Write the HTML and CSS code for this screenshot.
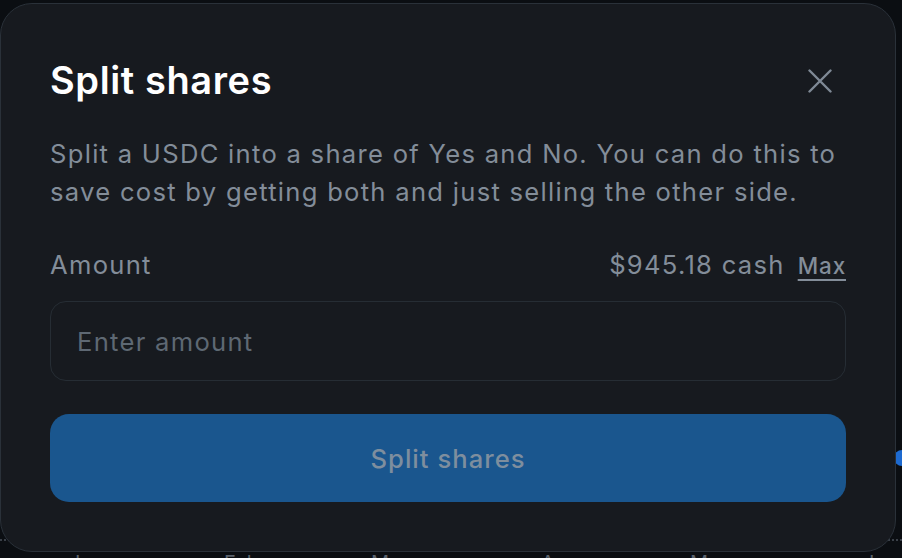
FILE: index.html
```html
<!DOCTYPE html>
<html lang="en">
<head>
    <meta charset="UTF-8">
    <meta name="viewport" content="width=device-width, initial-scale=1.0">
    <title>Split shares</title>
    <link rel="stylesheet" href="styles.css">
</head>
<body>
    <!-- chart behind the dialog -->
    <div class="chart">
        <span class="chart-dot"></span>
        <div class="chart-grid"></div>
        <div class="chart-axis">
            <span style="left: 69px">Jan</span>
            <span style="left: 224px">Feb</span>
            <span style="left: 371px">Mar</span>
            <span style="left: 541px">Apr</span>
            <span style="left: 690px">May</span>
            <span style="left: 863px">Jun</span>
        </div>
    </div>

    <div class="modal">
        <div class="modal-header">
            <h2>Split shares</h2>
            <button class="close-btn" aria-label="Close">
                <svg width="24" height="24" viewBox="0 0 24 24" fill="none" stroke="currentColor" stroke-width="2.4" stroke-linecap="round">
                    <path d="M1.5 1.5L22.5 22.5M22.5 1.5L1.5 22.5"/>
                </svg>
            </button>
        </div>
        <p class="modal-text">Split a USDC into a share of Yes and No. You can do this to save cost by getting both and just selling the other side.</p>
        <div class="amount-row">
            <span>Amount</span>
            <div class="balance">
                <span>$945.18 cash</span>
                <a href="#" class="max-link">Max</a>
            </div>
        </div>
        <input type="text" class="amount-input" placeholder="Enter amount" autocomplete="off">
        <button class="split-btn" disabled>Split shares</button>
    </div>
</body>
</html>
```

FILE: styles.css
```css
body {
    font-family: 'Inter', 'Noto Sans', sans-serif;
    background-color: #0b0e12;
    margin: 0;
    height: 100vh;
    overflow: hidden;
}

.chart {
    position: relative;
    height: 100%;
    display: flex;
    flex-direction: column;
    justify-content: flex-end;
}

.chart-grid {
    height: 0;
    border-top: 2px dotted #3a4048;
    margin-bottom: 10px;
}

.chart-dot {
    position: absolute;
    right: 0;
    top: 450px;
    width: 8px;
    height: 16px;
    border-radius: 8px 0 0 8px;
    background: #1d6ad0;
}

.chart-axis {
    position: relative;
    height: 7px;
}

.chart-axis span {
    position: absolute;
    top: 2px;
    font-size: 20px;
    line-height: 20px;
    color: #5a626c;
}

.modal {
    position: fixed;
    top: 3px;
    left: 0;
    width: 896px;
    box-sizing: border-box;
    background: #171a1f;
    border: 1px solid #2a3139;
    border-radius: 32px;
    padding: 49px 49px 49px;
}

.modal-header {
    display: flex;
    justify-content: space-between;
    align-items: center;
}

.modal-header h2 {
    margin: 0;
    font-size: 38px;
    line-height: 46px;
    font-weight: 600;
    letter-spacing: 0.016em;
    color: #ffffff;
}

.close-btn {
    width: 52px;
    height: 52px;
    margin-top: 2px;
    padding: 0;
    border: none;
    background: none;
    color: #7f8995;
    display: flex;
    align-items: center;
    justify-content: center;
    cursor: pointer;
}

.modal-text {
    margin: 28px 0 0;
    font-size: 25.6px;
    line-height: 38.4px;
    letter-spacing: 0.05em;
    color: #838d99;
}

.amount-row {
    margin-top: 34px;
    display: flex;
    justify-content: space-between;
    align-items: baseline;
    font-size: 25.6px;
    line-height: 38.4px;
    letter-spacing: 0.05em;
    color: #838d99;
}

.balance {
    display: flex;
    align-items: baseline;
    gap: 13px;
}

.max-link {
    font-size: 22.4px;
    font-weight: 500;
    letter-spacing: 0.04em;
    color: #838d99;
    text-decoration: underline;
    text-decoration-thickness: 1.5px;
    text-underline-offset: 5px;
}

.amount-input {
    display: block;
    width: 100%;
    box-sizing: border-box;
    height: 80px;
    margin-top: 16px;
    padding: 0 26px;
    border: 1.5px solid #262d34;
    border-radius: 16px;
    background: transparent;
    font-family: inherit;
    font-size: 25.6px;
    letter-spacing: 0.05em;
    color: #d0d6dd;
    outline: none;
}

.amount-input::placeholder {
    color: #5e6873;
}

.split-btn {
    display: block;
    width: 100%;
    height: 88px;
    margin-top: 33px;
    border: none;
    border-radius: 19px;
    background: #1a568e;
    font-family: inherit;
    font-size: 25.6px;
    font-weight: 500;
    letter-spacing: 0.04em;
    color: #7e8e9e;
    cursor: not-allowed;
}
```
